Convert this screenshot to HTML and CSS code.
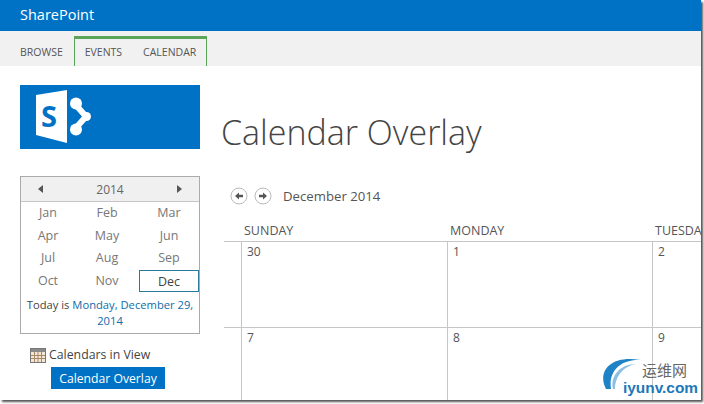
FILE: index.html
```html
<!DOCTYPE html>
<html lang="en">
<head>
  <meta charset="UTF-8">
  <title>Calendar Overlay</title>
  <link rel="stylesheet" href="styles.css">
</head>
<body>
  <div class="page">
    <div class="top-bar">SharePoint</div>

    <div class="ribbon">
      <div class="tab">BROWSE</div>
      <div class="tab-group">
        <div class="tab">EVENTS</div>
        <div class="tab">CALENDAR</div>
      </div>
    </div>

    <div class="content">
      <div class="side">
        <div class="logo">
          <svg width="80" height="64" viewBox="0 0 80 64">
            <path d="M16 10 L47 5 V58 L16 50 Z" fill="#fff"/>
            <text x="21" y="42" class="logo-s">S</text>
            <path d="M55 19 L66 31.5 L55 44" fill="none" stroke="#fff" stroke-width="6"/>
            <circle cx="56" cy="18.5" r="6" fill="#fff"/>
            <circle cx="56" cy="44.5" r="6" fill="#fff"/>
            <circle cx="66.5" cy="31.5" r="4.5" fill="#fff"/>
          </svg>
        </div>

        <div class="date-picker">
          <div class="year-row">
            <span class="arrow-left"></span>
            <span>2014</span>
            <span class="arrow-right"></span>
          </div>
          <div class="months">
            <span>Jan</span><span>Feb</span><span>Mar</span>
            <span>Apr</span><span>May</span><span>Jun</span>
            <span>Jul</span><span>Aug</span><span>Sep</span>
            <span>Oct</span><span>Nov</span><span class="current">Dec</span>
          </div>
          <div class="today">Today is <a>Monday, December 29, 2014</a></div>
        </div>

        <div class="in-view">
          <svg width="16" height="15" viewBox="0 0 16 15">
            <rect x="0.5" y="0.5" width="15" height="14" fill="#f3e6d4" stroke="#777"/>
            <rect x="1" y="1" width="14" height="3" fill="#8a8a8a"/>
            <path d="M1 7.5H15M1 10.5H15M4.5 4V14M8 4V14M11.5 4V14" stroke="#a98a68" fill="none"/>
          </svg>
          Calendars in View
        </div>
        <div class="overlay-item">Calendar Overlay</div>
      </div>

      <div class="main">
        <h1>Calendar Overlay</h1>
        <div class="month-nav">
          <span class="nav-btn">
            <svg width="18" height="18" viewBox="0 0 18 18"><circle cx="9" cy="9" r="8" fill="#fff" stroke="#bbb"/><path d="M5 9 L9 5.5 V7.8 H13 V10.2 H9 V12.5 Z" fill="#555"/></svg>
          </span>
          <span class="nav-btn">
            <svg width="18" height="18" viewBox="0 0 18 18"><circle cx="9" cy="9" r="8" fill="#fff" stroke="#bbb"/><path d="M13 9 L9 5.5 V7.8 H5 V10.2 H9 V12.5 Z" fill="#555"/></svg>
          </span>
          <span class="month-title">December 2014</span>
        </div>

        <div class="cal-grid">
          <div class="day-name"></div>
          <div class="day-name">SUNDAY</div>
          <div class="day-name">MONDAY</div>
          <div class="day-name">TUESDAY</div>

          <div class="gutter"></div>
          <div class="cell">30</div>
          <div class="cell">1</div>
          <div class="cell">2</div>

          <div class="gutter"></div>
          <div class="cell">7</div>
          <div class="cell">8</div>
          <div class="cell">9</div>
        </div>
      </div>
    </div>

    <div class="watermark">
      <svg width="48" height="40" viewBox="0 0 48 40">
        <path d="M6 33 C-3 16 10 -1 40 4 C22 3 8 14 11 33 Z" fill="#1e82c6"/>
        <path d="M13 33 C10 20 20 8 36 8 C24 10 15 20 15 33 Z" fill="#8cc0e2"/>
      </svg>
      <div class="wm-name">运维网</div>
      <div class="wm-url">iyunv.com</div>
    </div>
  </div>
</body>
</html>
```

FILE: styles.css
```css
* {
  margin: 0;
  padding: 0;
  box-sizing: border-box;
}

body {
  width: 704px;
  height: 404px;
  overflow: hidden;
  background: #fff;
  font-family: 'Open Sans', 'Liberation Sans', sans-serif;
  color: #444;
}

.page {
  position: relative;
  width: 701px;
  height: 400px;
  overflow: hidden;
  background: #fff;
  box-shadow: 2px 2px 2px #555;
}

.top-bar {
  height: 31px;
  padding: 5px 0 0 20px;
  background: #0072c6;
  color: #fff;
  font-size: 14.5px;
  line-height: 20px;
}

.ribbon {
  display: flex;
  height: 35px;
  padding-left: 20px;
  background: #f1f1f1;
  font-size: 10.5px;
}

.tab {
  padding-top: 11px;
  line-height: 20px;
  color: #555;
}

.tab-group {
  display: flex;
  gap: 21px;
  height: 30px;
  margin: 5px 0 0 11px;
  padding: 0 10px;
  border: 1px solid #5aa55a;
  border-top-width: 3px;
  border-bottom: 0;
}

.tab-group .tab {
  padding-top: 3px;
}

.content {
  display: flex;
}

.side {
  width: 180px;
  margin: 19px 0 0 20px;
  flex: none;
}

.logo {
  height: 64px;
  background: #0072c6;
}

.logo svg {
  display: block;
}

.logo-s {
  font-family: 'Open Sans', sans-serif;
  font-size: 29px;
  font-weight: 700;
  fill: #0072c6;
}

.date-picker {
  height: 158px;
  margin-top: 27px;
  border: 1px solid #aaa;
  font-size: 12px;
  color: #666;
}

.year-row {
  display: flex;
  justify-content: space-between;
  align-items: center;
  height: 25px;
  padding: 0 17px;
  background: #f0f0f0;
  border-bottom: 1px solid #c6c6c6;
}

.arrow-left,
.arrow-right {
  width: 0;
  height: 0;
  border-top: 4px solid transparent;
  border-bottom: 4px solid transparent;
}

.arrow-left {
  border-right: 5px solid #555;
}

.arrow-right {
  border-left: 5px solid #555;
}

.months {
  display: grid;
  grid-template-columns: 54px 64px 60px;
  grid-auto-rows: 22.5px;
  text-align: center;
  color: #777;
  font-size: 12.5px;
}

.months span {
  line-height: 21px;
}

.months .current {
  border: 1px solid #2a7a9e;
  color: #444;
  height: 22px;
}

.today {
  margin-top: 5px;
  padding: 0 3px;
  text-align: center;
  line-height: 16px;
  font-size: 11.2px;
  color: #444;
}

.today a {
  color: #0f6cab;
}

.in-view {
  display: flex;
  align-items: center;
  gap: 3px;
  margin: 13px 0 0 10px;
  font-size: 12.3px;
  color: #444;
  line-height: 16px;
}

.overlay-item {
  width: 114px;
  height: 22px;
  margin: 4px 0 0 31px;
  background: #0072c6;
  color: #fff;
  font-size: 12.2px;
  line-height: 23px;
  text-align: center;
}

.main {
  flex: 1;
  min-width: 0;
  padding-left: 24px;
}

h1 {
  margin: 43px 0 0 -3px;
  font-size: 34px;
  font-weight: 300;
  line-height: 46px;
  color: #444;
}

.month-nav {
  display: flex;
  align-items: center;
  gap: 6px;
  margin: 32px 0 0 6px;
}

.nav-btn {
  display: block;
  height: 18px;
}

.month-title {
  margin-left: 5px;
  font-size: 13.2px;
  color: #555;
}

.cal-grid {
  display: grid;
  grid-template-columns: 17px 206px 205px 205px;
  grid-template-rows: 19px 86px 86px;
  margin-top: 18px;
}

.day-name {
  border-bottom: 1px solid #c6c6c6;
  font-size: 12.5px;
  line-height: 16px;
  padding-left: 3px;
  color: #555;
  white-space: nowrap;
}

.gutter {
  border-bottom: 1px solid #c6c6c6;
}

.cell {
  padding: 2px 0 0 5px;
  border-left: 1px solid #c6c6c6;
  border-bottom: 1px solid #c6c6c6;
  font-size: 12px;
  line-height: 16px;
  color: #555;
}

.watermark {
  position: absolute;
  left: 600px;
  top: 356px;
  width: 101px;
  height: 44px;
}

.watermark svg {
  position: absolute;
  left: 0;
  top: 0;
}

.wm-name {
  position: absolute;
  left: 42px;
  top: 4px;
  font-family: 'Noto Sans CJK SC', sans-serif;
  font-size: 15px;
  line-height: 20px;
  color: #666;
}

.wm-url {
  position: absolute;
  left: 23px;
  top: 23px;
  font-family: 'Liberation Sans', sans-serif;
  font-size: 15.4px;
  font-weight: 700;
  line-height: 18px;
  color: #1e78b8;
}
```
